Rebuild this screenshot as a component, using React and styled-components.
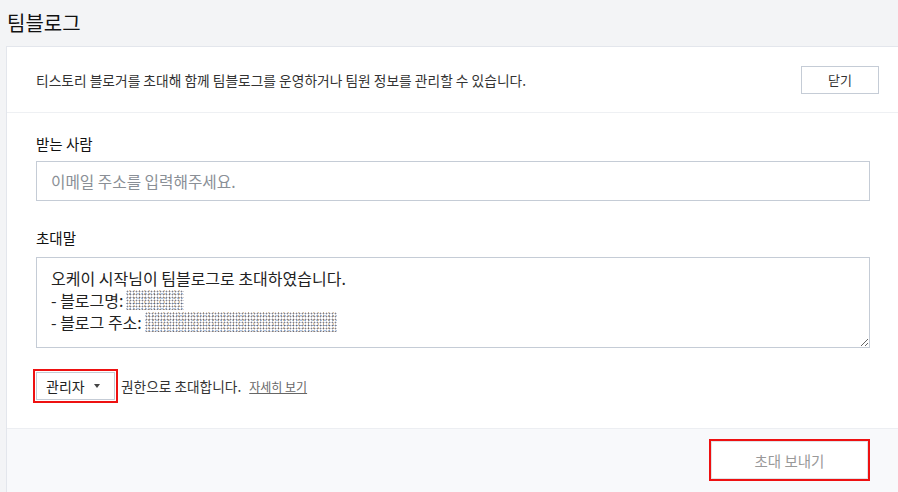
import React from "react";
import styled, { createGlobalStyle } from "styled-components";

const Global = createGlobalStyle`
  html, body { margin: 0; padding: 0; background: #f3f4f6; }
  body {
    font-family: "Noto Sans CJK KR", "Noto Sans", sans-serif;
    color: #222;
    width: 898px;
    height: 492px;
    overflow: hidden;
  }
  * { box-sizing: border-box; }
`;

const Page = styled.div`
  display: flex;
  flex-direction: column;
  padding-left: 6px;
`;

const Title = styled.h1`
  margin: 0;
  padding: 8px 0 0 1px;
  height: 46px;
  font-size: 20px;
  font-weight: 400;
  color: #111;
  line-height: 30px;
`;

const Card = styled.div`
  background: #fff;
  border: 1px solid #e3e6ec;
  border-right: none;
  display: flex;
  flex-direction: column;
`;

const Header = styled.div`
  display: flex;
  align-items: center;
  justify-content: space-between;
  height: 66px;
  padding: 0 19px 0 29px;
  border-bottom: 1px solid #eef0f3;
`;

const Desc = styled.p`
  margin: 0;
  font-size: 13.75px;
  color: #333;
`;

const CloseButton = styled.button`
  width: 78px;
  height: 28px;
  background: #fff;
  border: 1px solid #c5ccd6;
  font-family: inherit;
  font-size: 13px;
  color: #333;
  padding: 0;
`;

const Body = styled.div`
  display: flex;
  flex-direction: column;
  padding: 20px 28px 28px 29px;
`;

const Label = styled.div`
  font-size: 14.5px;
  font-weight: 400;
  color: #111;
  line-height: 22px;
  margin-bottom: ${(p) => p.$mb}px;
`;

const Input = styled.input`
  height: 40px;
  width: 100%;
  border: 1px solid #c5ccd6;
  padding: 0 14px;
  font-family: inherit;
  font-size: 15.7px;
  color: #333;
  outline: none;
  margin-bottom: 26px;
  &::placeholder { color: #8a8f96; }
`;

const TextArea = styled.div`
  height: 91px;
  width: 100%;
  border: 1px solid #c5ccd6;
  padding: 9px 14px 0;
  font-size: 16px;
  line-height: 22px;
  color: #222;
  resize: vertical;
  overflow: auto;
  margin-bottom: 24px;
`;

const Line = styled.div`
  display: flex;
  align-items: center;
  height: 22px;
  white-space: nowrap;
`;

const Redacted = styled.span`
  display: inline-block;
  width: ${(p) => p.$w}px;
  height: 20px;
  margin-left: 3px;
  background-image:
    radial-gradient(circle, rgba(40,40,60,0.6) 0.8px, transparent 1.1px),
    radial-gradient(circle, rgba(200,140,60,0.5) 0.8px, transparent 1.1px),
    radial-gradient(circle, rgba(70,130,200,0.45) 0.8px, transparent 1.1px);
  background-size: 3px 3px, 5px 4px, 4px 5px;
  background-position: 0 0, 1px 2px, 2px 1px;
`;

const RoleRow = styled.div`
  display: flex;
  align-items: center;
  font-size: 13.7px;
  color: #333;
`;

const Select = styled.div`
  display: flex;
  align-items: center;
  justify-content: space-between;
  width: 79px;
  height: 28px;
  border: 1px solid #c5ccd6;
  padding: 0 14px 0 9px;
  font-size: 14px;
  color: #222;
  outline: 2px solid #ee1111;
  outline-offset: 1px;
`;

const Caret = styled.span`
  width: 0;
  height: 0;
  border-left: 3.5px solid transparent;
  border-right: 3.5px solid transparent;
  border-top: 4px solid #444;
`;

const RoleText = styled.span`
  margin-left: 6px;
`;

const More = styled.a`
  margin-left: 8px;
  font-size: 12px;
  color: #666;
  text-decoration: underline;
`;

const Footer = styled.div`
  display: flex;
  justify-content: flex-end;
  background: #f8f9fb;
  border-top: 1px solid #eceef2;
  padding: 12px 30px 20px 0;
  height: 80px;
`;

const SendButton = styled.button`
  width: 157px;
  height: 38px;
  background: #fff;
  border: 1px solid #dfe2e7;
  outline: 2px solid #ee1111;
  font-family: inherit;
  font-size: 14.5px;
  color: #999;
  padding: 0;
`;

export default function App() {
  return (
    <>
      <Global />
      <Page>
        <Title>팀블로그</Title>
        <Card>
          <Header>
            <Desc>티스토리 블로거를 초대해 함께 팀블로그를 운영하거나 팀원 정보를 관리할 수 있습니다.</Desc>
            <CloseButton>닫기</CloseButton>
          </Header>
          <Body>
            <Label $mb={6}>받는 사람</Label>
            <Input placeholder="이메일 주소를 입력해주세요." />
            <Label $mb={8}>초대말</Label>
            <TextArea>
              <Line>오케이 시작님이 팀블로그로 초대하였습니다.</Line>
              <Line>- 블로그명:<Redacted $w={58} /></Line>
              <Line>- 블로그 주소:<Redacted $w={192} /></Line>
            </TextArea>
            <RoleRow>
              <Select>
                관리자
                <Caret />
              </Select>
              <RoleText>권한으로 초대합니다.</RoleText>
              <More href="#">자세히 보기</More>
            </RoleRow>
          </Body>
          <Footer>
            <SendButton>초대 보내기</SendButton>
          </Footer>
        </Card>
      </Page>
    </>
  );
}
